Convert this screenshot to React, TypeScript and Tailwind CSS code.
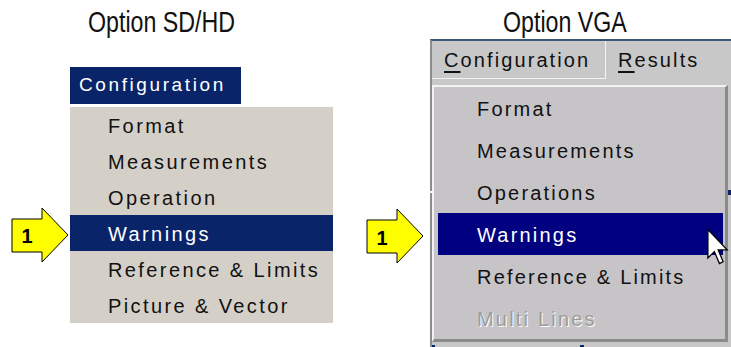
import type { ReactNode } from 'react';

const sdItems = ['Format', 'Measurements', 'Operation', 'Warnings', 'Reference & Limits', 'Picture & Vector'];
const vgaItems = ['Format', 'Measurements', 'Operations', 'Warnings', 'Reference & Limits', 'Multi Lines'];

function Pointer({ baseline }: { baseline: number }) {
  return (
    <svg width="58" height="56" viewBox="0 0 58 56" className="block">
      <polygon
        points="1,12 31,12 31,1 57,28 31,55 31,45 1,45"
        fill="#ffff00"
        stroke="#000"
        strokeWidth="1"
        strokeLinejoin="miter"
      />
      <text
        x="16"
        y={baseline}
        textAnchor="middle"
        fontFamily="Liberation Sans, Arial, sans-serif"
        fontWeight="700"
        fontSize="20"
        fill="#000"
      >
        1
      </text>
    </svg>
  );
}

function Cursor() {
  return (
    <svg width="22" height="38" viewBox="0 0 12 20" className="block">
      <path d="M0.5 0.5 L0.5 16 L4 12.5 L6.8 19 L8.8 18 L6.1 11.6 L11 11.6 Z" fill="#fff" stroke="#000" strokeWidth="0.7" />
    </svg>
  );
}

// narrow headline: Liberation Sans squeezed to the condensed width of the original
function Title({ children, className }: { children: ReactNode; className: string }) {
  return (
    <div className={`mt-[8px] h-[29px] ${className}`}>
      <h2 className="inline-block origin-left scale-x-[0.8] whitespace-nowrap text-[29px] leading-none text-[#111] font-['Liberation_Sans',Arial,sans-serif]">
        {children}
      </h2>
    </div>
  );
}

export default function App() {
  return (
    <div className="w-[731px] h-[347px] overflow-hidden bg-white flex font-['Liberation_Sans',Arial,sans-serif]">
      {/* Option SD/HD */}
      <div className="w-[365px] shrink-0 flex flex-col">
        <Title className="ml-[88px]">Option SD/HD</Title>
        <div className="mt-[30px] flex">
          <div className="w-[70px] shrink-0 pt-[140px] pl-[11px]">
            <Pointer baseline={36} />
          </div>
          <div className="flex flex-col">
            <div className="w-[171px] h-[37px] bg-[#0a246a] text-white text-[19px] tracking-[2.6px] pl-[9px] flex items-center">
              Configuration
            </div>
            <div className="mt-[3px] w-[263px] bg-[#d4d0c8]">
              {sdItems.map((item) => (
                <div
                  key={item}
                  className={`h-[36px] pl-[38px] pt-[2px] flex items-center text-[20px] tracking-[2.4px] ${
                    item === 'Warnings' ? 'bg-[#0a246a] text-white' : 'text-[#111]'
                  }`}
                >
                  {item}
                </div>
              ))}
            </div>
          </div>
        </div>
      </div>

      {/* Option VGA */}
      <div className="flex-1 flex flex-col">
        <Title className="ml-[138px]">Option VGA</Title>
        <div className="mt-[2px] flex flex-1">
          <div className="w-[65px] shrink-0 pt-[169px] pl-[1px]">
            <Pointer baseline={37} />
          </div>
          <div className="relative flex-1 border-l-2 border-t-2 border-l-[#8c8c8c] border-t-[#3d5673] bg-[#c8c8c8]">
            {/* menu bar */}
            <div className="flex h-[38px] text-[20px] tracking-[2.1px] text-[#111]">
              <div className="w-[174px] pl-[12px] flex items-center border-r border-b border-[#f4f4f4]">
                <span>
                  <span className="underline decoration-2 underline-offset-[4px]">C</span>onfiguration
                </span>
              </div>
              <div className="pl-[12px] flex items-center">
                <span>
                  <span className="underline decoration-2 underline-offset-[4px]">R</span>esults
                </span>
              </div>
            </div>

            {/* dropdown */}
            <div className="relative mt-[6px] w-[296px] border-t-2 border-l-2 border-t-[#f2f2f2] border-l-[#f2f2f2] border-r-[3px] border-b-[3px] border-r-[#8a8a8a] border-b-[#8a8a8a] bg-[#c6c4c7] pl-[4px] pr-[2px]">
              {vgaItems.map((item) => (
                <div
                  key={item}
                  className={`h-[42px] pl-[39px] pt-[2px] flex items-center text-[20px] tracking-[2.2px] ${
                    item === 'Warnings'
                      ? 'bg-[#000080] text-white'
                      : item === 'Multi Lines'
                        ? 'text-[#9c9c9c] [text-shadow:1px_1px_0_#ffffff]'
                        : 'text-[#111]'
                  }`}
                >
                  {item}
                </div>
              ))}
              <div className="absolute left-[273px] top-[141px]">
                <Cursor />
              </div>
            </div>

            {/* stray marks of the window behind */}
            <div className="absolute right-0 top-[149px] w-[3px] h-[5px] bg-[#0a246a]" />
            <div className="absolute -left-[2px] top-[150px] w-[3px] h-[2px] bg-white" />
            <div className="absolute left-[148px] bottom-0 w-[4px] h-[2px] bg-[#0a246a]" />
            <div className="absolute left-0 bottom-0 w-[3px] h-[2px] bg-[#0a246a]" />
          </div>
        </div>
      </div>
    </div>
  );
}
